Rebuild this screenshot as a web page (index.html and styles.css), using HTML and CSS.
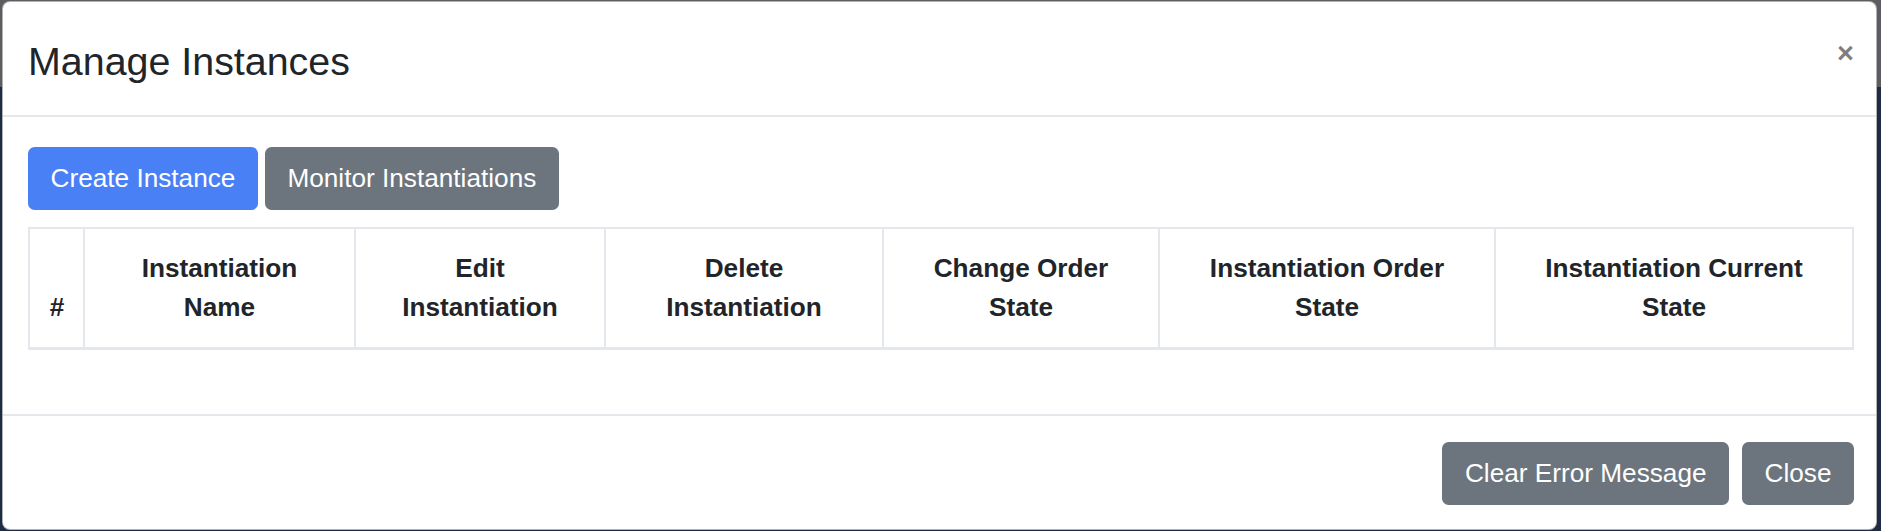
FILE: index.html
```html
<!DOCTYPE html>
<html lang="en">
<head>
    <meta charset="UTF-8">
    <meta name="viewport" content="width=device-width, initial-scale=1.0">
    <title>Manage Instances</title>
    <link rel="stylesheet" href="styles.css">
</head>
<body>
    <div class="modal">
        <div class="modal-header">
            <h4 class="modal-title">Manage Instances</h4>
            <button class="close" type="button">&times;</button>
        </div>
        <div class="modal-body">
            <div class="actions">
                <button class="btn btn-primary">Create Instance</button>
                <button class="btn btn-secondary">Monitor Instantiations</button>
            </div>
            <table class="instances">
                <thead>
                    <tr>
                        <th class="col-num">#</th>
                        <th class="col-name">Instantiation Name</th>
                        <th class="col-edit">Edit Instantiation</th>
                        <th class="col-delete">Delete Instantiation</th>
                        <th class="col-change">Change Order State</th>
                        <th class="col-order">Instantiation Order State</th>
                        <th class="col-current">Instantiation Current State</th>
                    </tr>
                </thead>
                <tbody></tbody>
            </table>
        </div>
        <div class="modal-footer">
            <button class="btn btn-secondary">Clear Error Message</button>
            <button class="btn btn-secondary">Close</button>
        </div>
    </div>
</body>
</html>
```

FILE: styles.css
```css
* {
    box-sizing: border-box;
}

body {
    margin: 0;
    height: 531px;
    overflow: hidden;
    font-family: "Liberation Sans", Arial, sans-serif;
    font-size: 26.2px;
    line-height: 1.5;
    color: #212529;
    background: linear-gradient(#5b5d60 0, #5b5d60 87px, #1d2b44 87px);
}

.modal {
    margin: 1px 0 0 2px;
    width: 1875px;
    background: #fff;
    border: 1px solid rgba(0, 0, 0, 0.3);
    border-radius: 8px;
    overflow: hidden;
}

.modal-header {
    display: flex;
    align-items: flex-start;
    padding: 36px 22px 30px 25px;
    border-bottom: 2px solid #e4e7eb;
}

.modal-title {
    flex: 1;
    margin: 0;
    font-size: 39.4px;
    font-weight: 400;
    line-height: 47px;
}

.close {
    margin-top: 1px;
    padding: 0;
    background: none;
    border: 0;
    font-family: inherit;
    font-size: 29px;
    font-weight: 700;
    line-height: 1;
    color: #000;
    opacity: 0.5;
    text-shadow: 0 1px 0 #fff;
    cursor: pointer;
}

.modal-body {
    padding: 30px 25px 64px;
}

.actions {
    display: flex;
    gap: 7px;
}

.btn {
    padding: 9.8px 20.5px;
    border: 2px solid transparent;
    border-radius: 6.6px;
    font-family: inherit;
    font-size: 26.2px;
    line-height: 39.3px;
    color: #fff;
    cursor: pointer;
}

.btn-primary {
    background-color: #4a80f5;
    border-color: #4a80f5;
}

.btn-secondary {
    background-color: #6c757d;
    border-color: #6c757d;
}

.instances {
    width: 100%;
    margin-top: 17px;
    table-layout: fixed;
    border-collapse: collapse;
    border: 2px solid #e4e7eb;
}

.instances th {
    padding: 19.7px;
    border: 2px solid #e4e7eb;
    border-bottom-width: 3px;
    font-weight: 700;
    line-height: 39.3px;
    text-align: center;
    vertical-align: bottom;
}

.col-num { width: 55px; }
.col-name { width: 271px; }
.col-edit { width: 250px; }
.col-delete { width: 278px; }
.col-change { width: 276px; }
.col-order { width: 336px; }
.col-current { width: 358px; }

.modal-footer {
    display: flex;
    justify-content: flex-end;
    gap: 13px;
    padding: 26px 22px 24px;
    border-top: 2px solid #e4e7eb;
}
```
